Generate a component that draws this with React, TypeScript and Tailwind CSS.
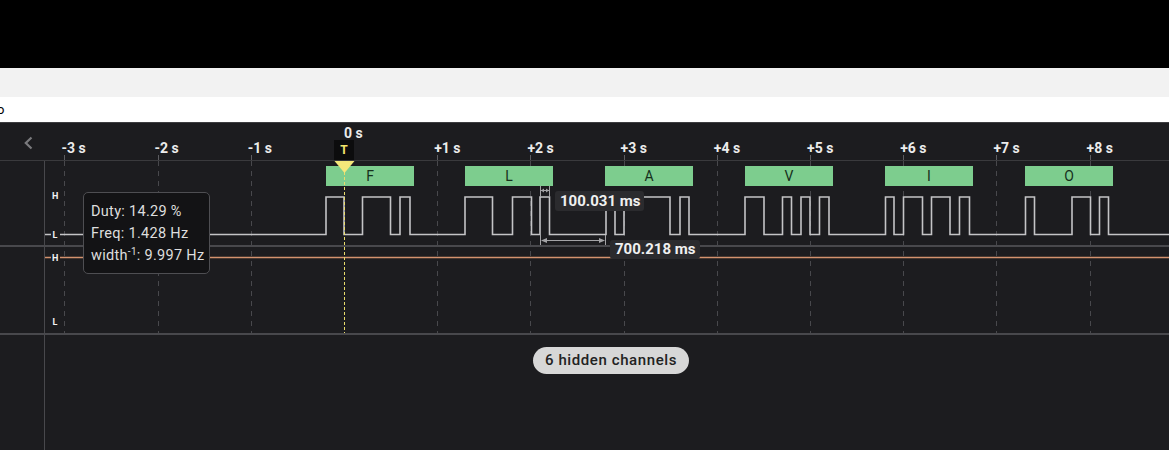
import React from "react";

// timeline scale, measured off the ruler
const PX_PER_S = 93.2;
const T0 = 344;
const tx = (s: number) => T0 + s * PX_PER_S;

const ticks = [-3, -2, -1, 0, 1, 2, 3, 4, 5, 6, 7, 8];
const tickLabel = (s: number) => (s === 0 ? "0 s" : `${s > 0 ? "+" : ""}${s} s`);

const HIGH = 197;
const LOW = 234.5;

// [rise, fall] pairs of channel 0
const pulses: [number, number][] = [
  [326, 344], [362.5, 390.5], [400, 410],
  [465, 492.5], [512.5, 531.5], [540, 549.5],
  [606, 615], [624, 670], [680, 689],
  [745, 764], [782.5, 791.5], [801, 810], [819.5, 829],
  [885.5, 894], [903.5, 922.5], [931.5, 950], [959.5, 969.5],
  [1025.5, 1034.5], [1072, 1090.5], [1099.5, 1108.5],
];

const annotations = [
  { ch: "F", x: 326 },
  { ch: "L", x: 465 },
  { ch: "A", x: 605 },
  { ch: "V", x: 745 },
  { ch: "I", x: 885 },
  { ch: "O", x: 1025 },
];

function wavePath() {
  let d = `M45 ${LOW}`;
  for (const [a, b] of pulses) d += ` H${a} V${HIGH} H${b} V${LOW}`;
  return d + " H1169";
}

function Ruler() {
  return (
    <div className="flex h-[38px] border-b border-[#3a3a3d]">
      <div className="w-[44px] shrink-0 pl-[24px] pt-[13px]">
        <svg width="9" height="14" viewBox="0 0 9 14">
          <polyline points="7.5,1.5 1.8,7 7.5,12.5" fill="none" stroke="#7a7a7d" strokeWidth="2.2" />
        </svg>
      </div>
      <div className="relative flex-1 -ml-[44px]">
        {ticks.map((s) => (
          <React.Fragment key={s}>
            <span
              className={`absolute text-[14px] font-bold leading-[16px] text-[#ececec] ${s === 0 ? "top-[2px]" : "top-[17px]"}`}
              style={{ left: s === 0 ? tx(s) : tx(s) - 3 }}
            >
              {tickLabel(s)}
            </span>
            {s !== 0 && (
              <span className="absolute bottom-0 h-[5px] w-px bg-[#5c5c60]" style={{ left: Math.round(tx(s)) }} />
            )}
          </React.Fragment>
        ))}
        <div className="absolute left-[334px] top-[17px] flex h-[20px] w-[20px] items-center justify-center bg-[#0c0c0d] text-[12px] font-bold text-[#f3e56c]">
          T
        </div>
      </div>
    </div>
  );
}

function Overlay() {
  return (
    <svg className="pointer-events-none absolute left-0 top-0" width="1169" height="174" viewBox="0 0 1169 174">
      <g transform="translate(0,-161)">
        {ticks
          .filter((s) => s !== 0)
          .map((s) => (
            <line
              key={s}
              x1={Math.round(tx(s)) + 0.5}
              x2={Math.round(tx(s)) + 0.5}
              y1="161"
              y2="333"
              stroke="#48484c"
              strokeDasharray="5 5"
            />
          ))}

        {annotations.map((a) => (
          <g key={a.ch}>
            <rect x={a.x} y="166" width="88" height="20" fill="#7dcd8e" />
            <text x={a.x + 44} y="181" textAnchor="middle" fontSize="14" fontFamily="Roboto, sans-serif" fill="#16301c">
              {a.ch}
            </text>
          </g>
        ))}

        <path d={wavePath()} fill="none" stroke="#c4c4c6" strokeWidth="1.6" />
        <line x1="45" x2="1169" y1="257.5" y2="257.5" stroke="#d4926e" strokeWidth="1.3" />

        {/* measurement markers */}
        <g stroke="#a3a3a6" strokeWidth="1">
          <line x1="540.5" x2="540.5" y1="186" y2="197" />
          <line x1="549.5" x2="549.5" y1="186" y2="197" />
          <line x1="541" x2="549" y1="190.5" y2="190.5" />
          <line x1="540.5" x2="540.5" y1="235" y2="245" />
          <line x1="605.5" x2="605.5" y1="235" y2="245" />
          <line x1="546" x2="600" y1="240.5" y2="240.5" />
        </g>
        <g fill="#a3a3a6">
          <polygon points="541,190.5 544,188.5 544,192.5" />
          <polygon points="549,190.5 546,188.5 546,192.5" />
          <polygon points="541,240.5 547,238 547,243" />
          <polygon points="605,240.5 599,238 599,243" />
        </g>

        {/* trigger */}
        <line x1="344.5" x2="344.5" y1="172" y2="333" stroke="#eadd6c" strokeDasharray="3 2" />
        <polygon points="334.5,161 354.5,161 344.5,173" fill="#f5e77a" />

        {/* channel level labels */}
        <g fontSize="9" fontWeight="700" fontFamily="Roboto, sans-serif" fill="#f2f2f2">
          <text x="52" y="199">H</text>
          <rect x="51" y="230" width="9" height="9" fill="#1c1c1f" />
          <text x="52.5" y="238">L</text>
          <rect x="51" y="253" width="9" height="9" fill="#1c1c1f" />
          <text x="52" y="260.5">H</text>
          <text x="52.5" y="325">L</text>
        </g>
      </g>
    </svg>
  );
}

function ChannelRow({ h }: { h: string }) {
  return (
    <div className={`flex border-b-2 border-[#48484c] ${h}`}>
      <div className="w-[44px] shrink-0" />
      <div className="flex-1 border-l border-[#48484c]" />
    </div>
  );
}

export default function App() {
  return (
    <div className="flex h-[450px] w-full flex-col overflow-hidden [font-family:Roboto,sans-serif]">
      <div className="h-[68px] bg-black" />
      <div className="h-[29px] bg-[#f2f2f2]" />
      <div className="flex h-[25px] items-center bg-white text-[13px] text-black">
        <span className="-ml-[3px]">o</span>
      </div>

      <div className="flex flex-1 flex-col border-t border-[#3d3d40] bg-[#1c1c1f]">
        <Ruler />

        <div className="relative">
          <ChannelRow h="h-[86px]" />
          <ChannelRow h="h-[88px]" />
          <Overlay />

          <div className="absolute left-[83px] top-[31px] w-[127px] rounded-[5px] border border-[#4e4e52] bg-[#131315] pb-[6px] pl-[7px] pt-[8px] text-[14.5px] leading-[22px] tracking-[0.3px] text-[#dedede]">
            <div>Duty: 14.29 %</div>
            <div>Freq: 1.428 Hz</div>
            <div>
              width<sup className="text-[10px]">-1</sup>: 9.997 Hz
            </div>
          </div>

          <div className="absolute left-[555px] top-[30px] flex h-[20px] w-[89px] items-center rounded-[3px] bg-[#2b2b2e] pl-[5px] text-[15px] font-bold text-[#f0f0f0]">
            100.031 ms
          </div>
          <div className="absolute left-[610px] top-[79px] flex h-[19px] w-[90px] items-center rounded-[3px] bg-[#2b2b2e] pl-[5px] text-[15px] font-bold text-[#f0f0f0]">
            700.218 ms
          </div>
        </div>

        <div className="flex flex-1">
          <div className="w-[44px] shrink-0" />
          <div className="flex flex-1 justify-center border-l border-[#48484c] pl-[8px] pt-[12px]">
            <div className="flex h-[27px] items-center rounded-full bg-[#d7d7d7] px-[12px] text-[15px] font-medium tracking-[0.6px] text-[#222]">
              6 hidden channels
            </div>
          </div>
        </div>
      </div>
    </div>
  );
}
